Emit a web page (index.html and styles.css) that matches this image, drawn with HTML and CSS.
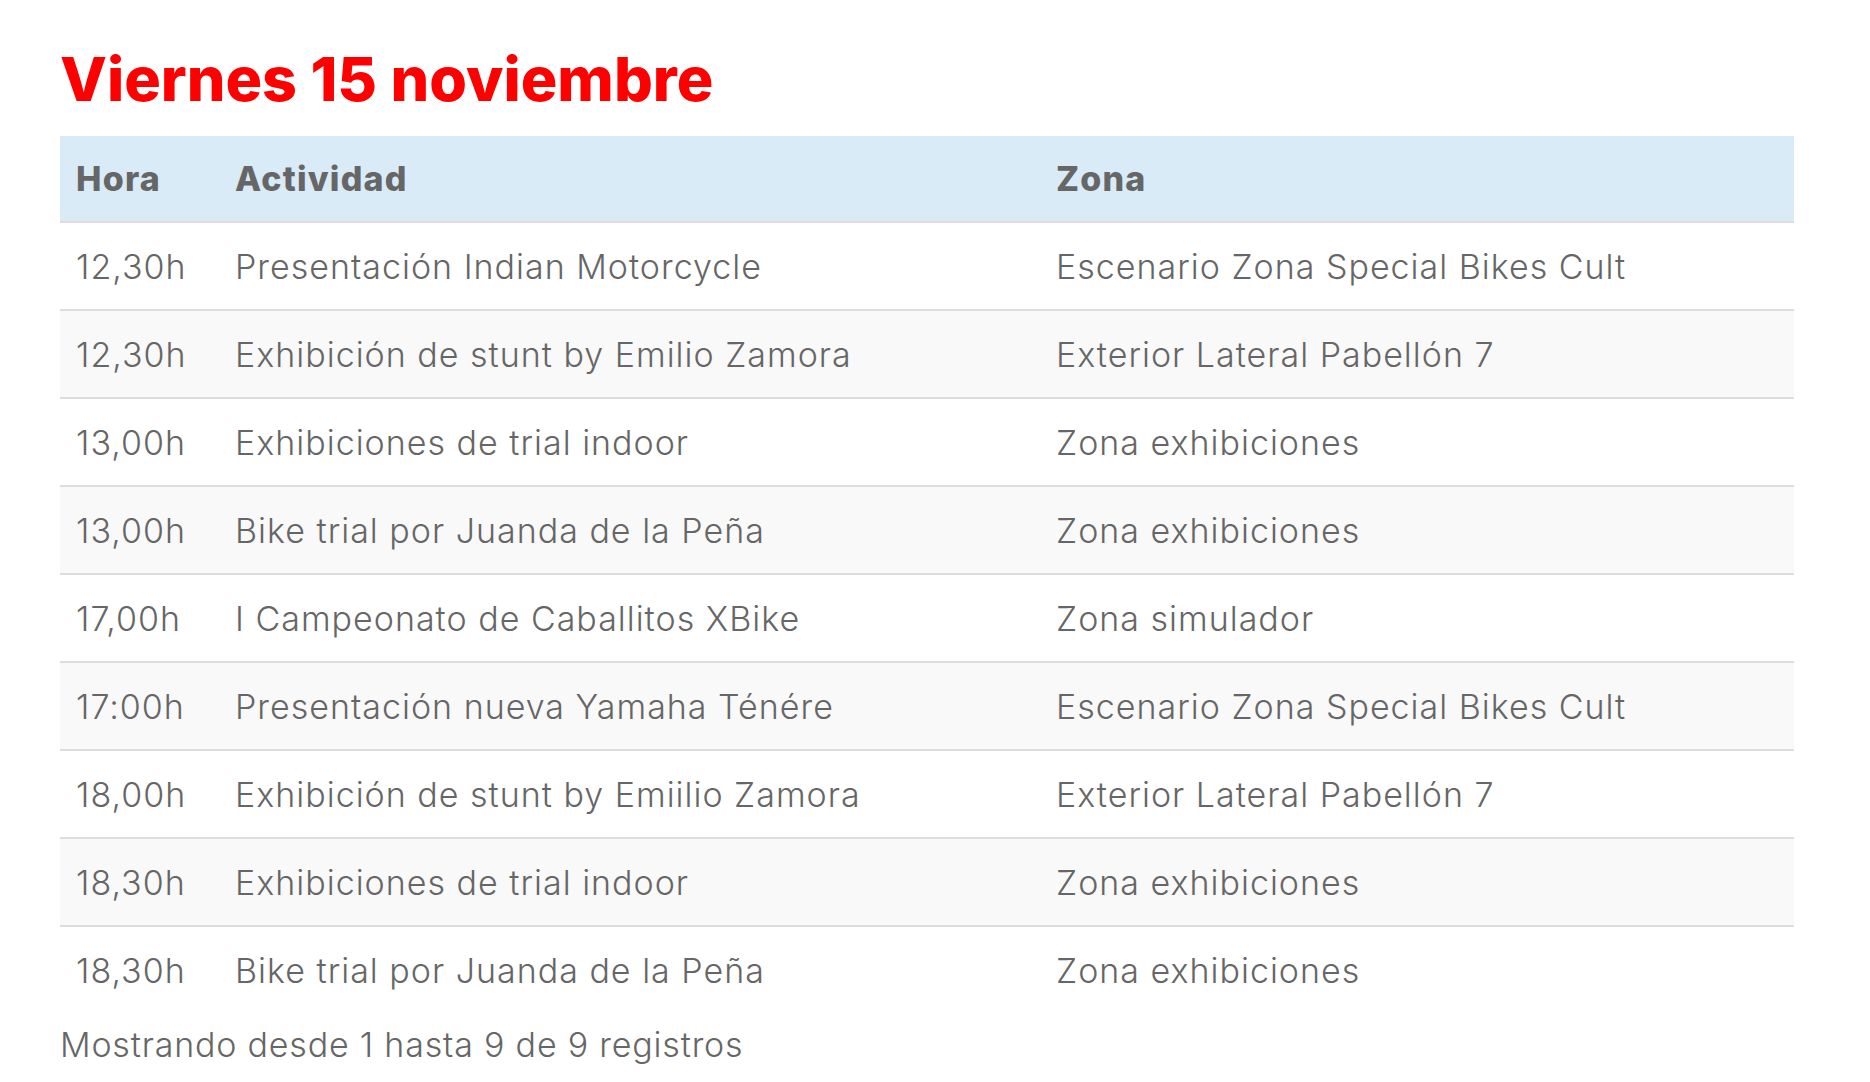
FILE: index.html
```html
<!DOCTYPE html>
<html lang="es">
<head>
  <meta charset="UTF-8" />
  <title>Programa - Viernes 15 noviembre</title>
  <link rel="stylesheet" href="styles.css">
</head>
<body>
  <div class="schedule">
    <h2 class="day-title">Viernes 15 noviembre</h2>

    <table class="activities">
      <thead>
        <tr>
          <th class="col-hora">Hora</th>
          <th class="col-act">Actividad</th>
          <th>Zona</th>
        </tr>
      </thead>
      <tbody>
        <tr><td>12,30h</td><td>Presentación Indian Motorcycle</td><td>Escenario Zona Special Bikes Cult</td></tr>
        <tr><td>12,30h</td><td>Exhibición de stunt by Emilio Zamora</td><td>Exterior Lateral Pabellón 7</td></tr>
        <tr><td>13,00h</td><td>Exhibiciones de trial indoor</td><td>Zona exhibiciones</td></tr>
        <tr><td>13,00h</td><td>Bike trial por Juanda de la Peña</td><td>Zona exhibiciones</td></tr>
        <tr><td>17,00h</td><td>I Campeonato de Caballitos XBike</td><td>Zona simulador</td></tr>
        <tr><td>17:00h</td><td>Presentación nueva Yamaha Ténére</td><td>Escenario Zona Special Bikes Cult</td></tr>
        <tr><td>18,00h</td><td>Exhibición de stunt by Emiilio Zamora</td><td>Exterior Lateral Pabellón 7</td></tr>
        <tr><td>18,30h</td><td>Exhibiciones de trial indoor</td><td>Zona exhibiciones</td></tr>
        <tr><td>18,30h</td><td>Bike trial por Juanda de la Peña</td><td>Zona exhibiciones</td></tr>
      </tbody>
    </table>

    <div class="table-info">Mostrando desde 1 hasta 9 de 9 registros</div>
  </div>
</body>
</html>
```

FILE: styles.css
```css
* {
  box-sizing: border-box;
}
body {
  margin: 0;
  background: #fff;
  font-family: 'Inter', 'Lato', sans-serif;
  color: #666;
}

.schedule {
  padding: 42px 76px 0 60px;
}
.day-title {
  margin: 0 0 20px;
  color: #ff0000;
  font-size: 61px;
  font-weight: 800;
  line-height: 74px;
}

/* === Table === */
.activities {
  width: 100%;
  border-collapse: collapse;
}
.activities th {
  background: #d9ebf7;
  text-align: left;
  font-size: 34px;
  font-weight: 800;
  letter-spacing: 1.2px;
  color: #666;
  height: 86px;
  padding: 0 16px;
  border-bottom: 2px solid #ddd;
}
.activities td {
  font-size: 34px;
  font-weight: 300;
  letter-spacing: 1px;
  color: #666;
  height: 88px;
  padding: 0 16px;
  border-bottom: 2px solid #ddd;
}
.activities tbody tr:nth-child(even) td {
  background: #f9f9f9;
}
.activities tbody tr:last-child td {
  border-bottom: none;
}
.col-hora { width: 159px; }
.col-act { width: 821px; }

.table-info {
  font-size: 34px;
  font-weight: 300;
  letter-spacing: 0.8px;
  color: #666;
  padding-top: 10px;
}
```
